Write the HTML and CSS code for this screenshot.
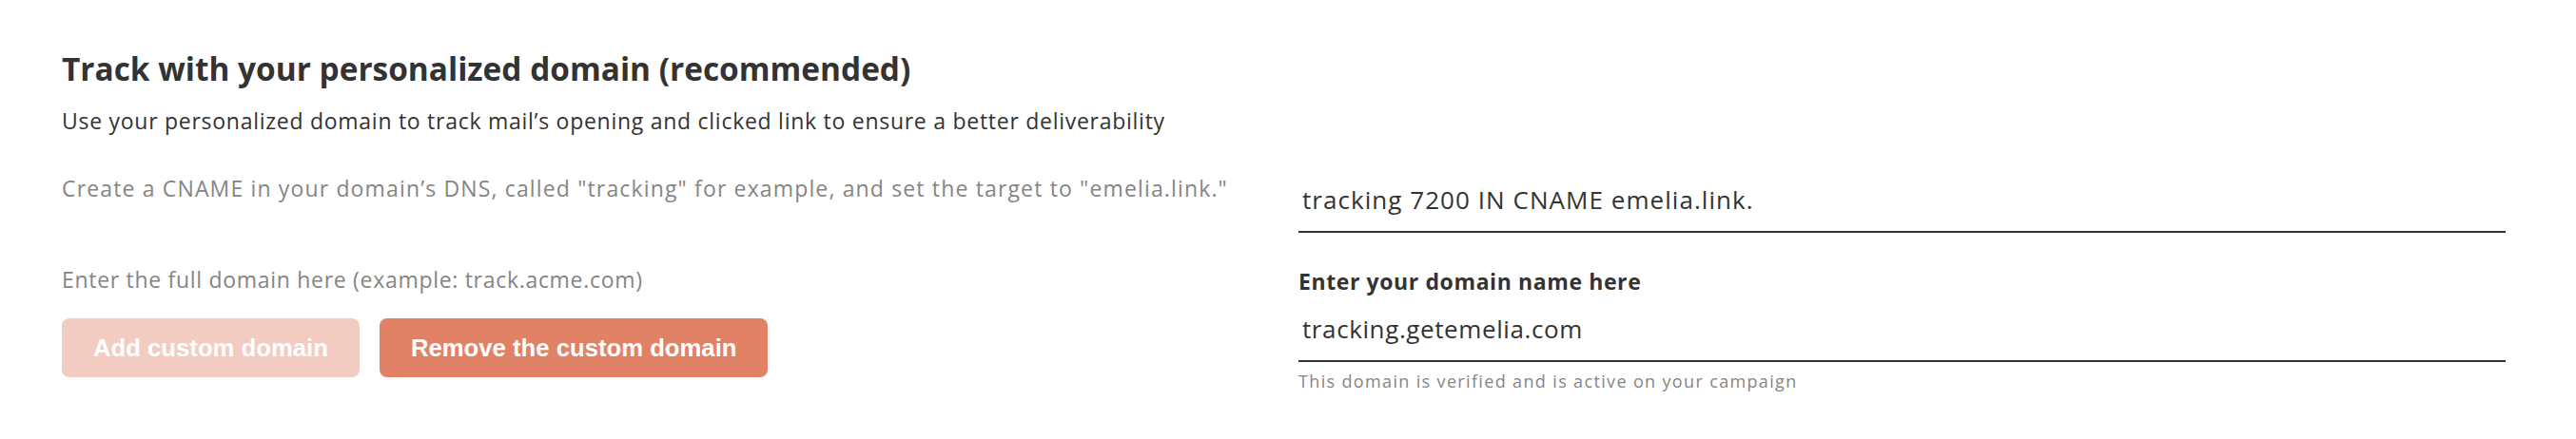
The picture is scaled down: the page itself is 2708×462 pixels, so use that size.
FILE: index.html
```html
<!DOCTYPE html>
<html lang="en">
<head>
  <meta charset="UTF-8">
  <title>Tracking domain</title>
  <link rel="stylesheet" href="styles.css">
</head>
<body>
  <section class="tracking">
    <h2 class="tracking-title">Track with your personalized domain (recommended)</h2>
    <p class="tracking-intro">Use your personalized domain to track mail’s opening and clicked link to ensure a better deliverability</p>

    <div class="tracking-grid">
      <!-- Instructions and actions -->
      <div class="tracking-help">
        <p class="hint hint-cname">Create a CNAME in your domain’s DNS, called "tracking" for example, and set the target to "emelia.link."</p>
        <p class="hint hint-domain">Enter the full domain here (example: track.acme.com)</p>
        <div class="actions">
          <button class="btn" disabled>Add custom domain</button>
          <button class="btn">Remove the custom domain</button>
        </div>
      </div>

      <!-- DNS record and domain field -->
      <div class="tracking-fields">
        <input type="text" class="field field-record" value="tracking 7200 IN CNAME emelia.link." readonly>
        <label class="field-label" for="domain">Enter your domain name here</label>
        <input type="text" id="domain" class="field field-domain" value="tracking.getemelia.com">
        <div class="field-note">This domain is verified and is active on your campaign</div>
      </div>
    </div>
  </section>
</body>
</html>
```

FILE: styles.css
```css
body {
  margin: 0;
  background: #fff;
  font-family: "Open Sans", Lato, sans-serif;
  color: #333;
}
.tracking {
  padding: 52px 74px 0 65px;
}
.tracking-title {
  margin: 0;
  font-size: 33.4px;
  line-height: 40px;
  font-weight: 700;
}
.tracking-intro {
  margin: 21px 0 0;
  font-size: 23px;
  line-height: 28px;
  font-weight: 500;
  letter-spacing: 0.73px;
}
.tracking-grid {
  display: grid;
  grid-template-columns: 1269px 1269px;
  column-gap: 31px;
  margin-top: 29px;
}
.hint {
  margin: 0;
  font-size: 23px;
  line-height: 28px;
  font-weight: 500;
  color: #858585;
}
.hint-cname {
  margin-top: 14px;
  letter-spacing: 1.15px;
}
.hint-domain {
  margin-top: 68px;
  letter-spacing: 0.7px;
}
.actions {
  display: flex;
  gap: 21px;
  margin-top: 27px;
}
.btn {
  height: 62px;
  padding: 0 33px;
  border: none;
  border-radius: 8px;
  background: #e18166;
  color: #fff;
  font-family: "Liberation Sans", Arial, sans-serif;
  font-size: 25.7px;
  font-weight: 700;
  cursor: pointer;
}
.btn:disabled {
  opacity: 0.4;
  cursor: default;
}
.tracking-fields {
  display: flex;
  flex-direction: column;
}
.field {
  display: block;
  width: 100%;
  box-sizing: border-box;
  height: 75px;
  padding: 25px 4px 18px;
  border: none;
  border-bottom: 2px solid #333;
  outline: none;
  font-family: "Open Sans", Lato, sans-serif;
  font-size: 26px;
  font-weight: 500;
  letter-spacing: 0.6px;
  color: #333;
  background: transparent;
}
.field-record {
  letter-spacing: 1.05px;
}
.field-label {
  margin-top: 38px;
  font-size: 23px;
  line-height: 26px;
  font-weight: 700;
  letter-spacing: 0.6px;
}
.field-domain {
  height: 72px;
  padding: 22px 4px 18px;
}
.field-note {
  margin-top: 9px;
  font-size: 18px;
  line-height: 22px;
  letter-spacing: 1.35px;
  color: #858585;
}
```
